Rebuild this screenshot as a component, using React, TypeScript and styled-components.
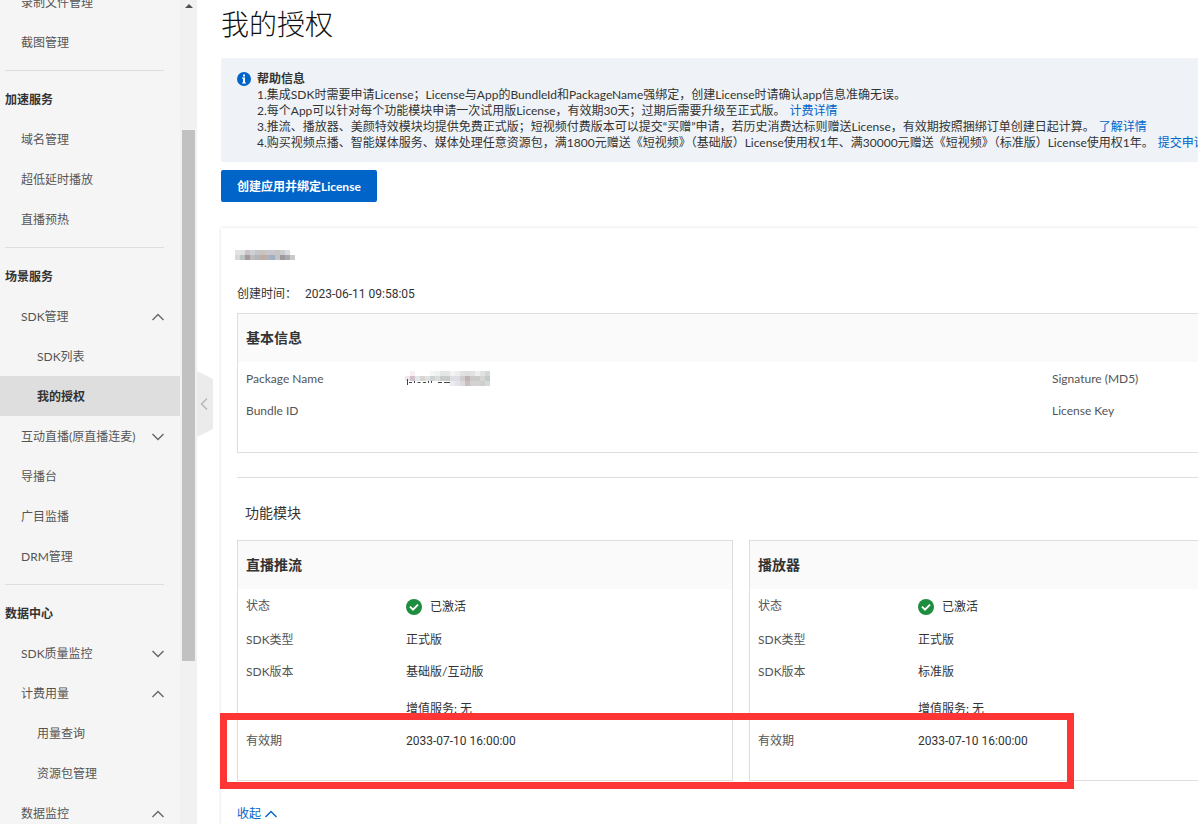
import React from "react";
import styled, { createGlobalStyle, css } from "styled-components";

const Global = createGlobalStyle`
  *, *::before, *::after { box-sizing: border-box; }
  body {
    margin: 0;
    background: #fff;
    color: #333;
    font: 12px/16px Lato, "Noto Sans CJK SC", sans-serif;
  }
  h1, h2, h3, p, dl, dd, ul, ol { margin: 0; padding: 0; }
  ul, ol { list-style: none; }
  button { font: inherit; cursor: pointer; }
  a { color: #0064c8; text-decoration: none; }
  time { font-family: Roboto, sans-serif; }
`;

const Page = styled.div`
  display: flex;
  height: 100vh;
  overflow: hidden;
`;

const Sidebar = styled.aside`
  position: relative;
  z-index: 1;
  display: flex;
  flex: none;
  background: #f5f5f5;
`;

const Nav = styled.nav`
  width: 180px;
  overflow: hidden;
`;

const NavScroll = styled.div`
  margin-top: -18px;
`;

const NavGroup = styled.section`
  & + &::before {
    content: "";
    display: block;
    height: 1px;
    margin: 8px 16px 8px 5px;
    background: #dedede;
  }
`;

const NavHeading = styled.h2`
  height: 40px;
  padding-left: 5px;
  font-size: 12px;
  line-height: 42px;
`;

const navRow = css`
  display: flex;
  align-items: center;
  justify-content: space-between;
  width: 100%;
  height: 40px;
  padding: 2px 16px 0 21px;
  border: 0;
  background: none;
  color: #555;
  white-space: nowrap;
`;

const NavToggle = styled.button`
  ${navRow}
`;

const NavLink = styled.a<{ $nested?: boolean; $active?: boolean }>`
  ${navRow}
  ${(p) => p.$nested && "padding-left: 37px;"}
  ${(p) => p.$active && "background: #dedede; color: #333; font-weight: 700;"}
`;

const ScrollTrack = styled.div`
  display: flex;
  flex-direction: column;
  align-items: center;
  width: 17px;
  background: #f1f1f1;
`;

const ScrollArrow = styled.div`
  flex: none;
  height: 17px;
  padding-top: 4px;
  &::before {
    content: "";
    display: block;
    border: 4px solid transparent;
    border-top-width: 0;
    border-bottom-color: #505050;
  }
`;

const ScrollSpace = styled.div<{ $part: number }>`
  flex: ${(p) => p.$part};
`;

const ScrollThumb = styled.div`
  flex: 531;
  width: 13px;
  background: #c1c1c1;
`;

const CollapseTab = styled.button`
  position: absolute;
  left: 100%;
  top: calc(50% - 41px);
  display: flex;
  align-items: center;
  justify-content: center;
  width: 16px;
  height: 66px;
  padding: 0 2px 0 0;
  border: 0;
  background: #ebebeb;
  clip-path: polygon(0 0, 100% 8px, 100% 58px, 0 100%);
`;

const Main = styled.main`
  flex: 1;
  min-width: 0;
  padding: 6px 0 0 24px;
  overflow: hidden;
`;

const Title = styled.h1`
  margin-bottom: 16px;
  color: #111;
  font-size: 28px;
  line-height: 36px;
  font-weight: 300;
`;

const Notice = styled.section`
  display: flex;
  gap: 6px;
  padding: 13px 16px 11px;
  border-radius: 2px 0 0 2px;
  background: #eff3f8;
  white-space: nowrap;
`;

const NoticeIcon = styled.svg`
  flex: none;
  margin-top: 1px;
`;

const NoticeTitle = styled.h2`
  font-size: 12px;
  line-height: 16px;
`;

const NoticeLink = styled.a`
  margin-left: 4px;
`;

const PrimaryButton = styled.button`
  display: block;
  height: 32px;
  margin: 8px 0 26px;
  padding: 2px 16px 0;
  border: 0;
  border-radius: 2px;
  background: #0064c8;
  color: #fff;
  font-weight: 700;
`;

const Card = styled.article`
  padding: 22px 0 24px 16px;
  box-shadow: 0 0 3px rgba(0, 0, 0, 0.14);
`;

const AppName = styled.svg`
  display: block;
  margin: 0 0 26px -2px;
`;

const Created = styled.p`
  display: flex;
  gap: 8px;
  margin-bottom: 11px;
`;

const Panel = styled.section`
  flex: none;
  border: 1px solid #dedede;
`;

const InfoPanel = styled(Panel)`
  width: 1622px;
`;

const ModulePanel = styled(Panel)`
  width: 496px;
`;

const PanelTitle = styled.h3`
  padding-left: 8px;
  background: #fafafa;
  font-size: 14px;
  line-height: 48px;
`;

const ModuleFields = styled.dl`
  padding: 1px 0 23px 8px;
`;

const InfoFields = styled.dl`
  display: grid;
  grid-template-columns: 1fr 1fr;
  padding: 1px 0 25px 8px;
`;

const Field = styled.div`
  display: flex;
  line-height: 32px;
`;

const Term = styled.dt`
  width: 160px;
  color: #555;
`;

const Status = styled.dd`
  display: flex;
  align-items: center;
  gap: 8px;
  height: 34px;
`;

const Extra = styled.p`
  margin-top: 5px;
`;

const PackageName = styled.svg`
  display: block;
  margin: 8px 0 0 -1px;
`;

const Divider = styled.hr`
  height: 1px;
  margin: 24px 0;
  border: 0;
  background: #dedede;
`;

const SectionTitle = styled.h2`
  margin-bottom: 16px;
  padding-left: 8px;
  font-size: 14px;
  line-height: 22px;
  font-weight: 400;
`;

const Modules = styled.div`
  position: relative;
  display: flex;
  gap: 16px;
`;

const Highlight = styled.div`
  position: absolute;
  top: 173px;
  left: -17px;
  width: 854px;
  height: 76px;
  border: 7px solid #fd3535;
  pointer-events: none;
`;

const FoldButton = styled.button`
  display: flex;
  align-items: center;
  gap: 4px;
  margin-top: 25px;
  padding: 0;
  border: 0;
  background: none;
  color: #0064c8;
`;

function Chevron({ up, color = "#666" }: { up?: boolean; color?: string }) {
  return (
    <svg width="12" height="8" viewBox="0 0 12 8" fill="none" stroke={color} strokeWidth="1.4" aria-hidden>
      <path d={up ? "M0.5 7 L6 1.5 L11.5 7" : "M0.5 1 L6 6.5 L11.5 1"} />
    </svg>
  );
}

type Item = { label: string; open?: boolean; nested?: boolean; active?: boolean };

const groups: { title?: string; items: Item[] }[] = [
  { items: [{ label: "录制文件管理" }, { label: "截图管理" }] },
  { title: "加速服务", items: [{ label: "域名管理" }, { label: "超低延时播放" }, { label: "直播预热" }] },
  {
    title: "场景服务",
    items: [
      { label: "SDK管理", open: true },
      { label: "SDK列表", nested: true },
      { label: "我的授权", nested: true, active: true },
      { label: "互动直播(原直播连麦)", open: false },
      { label: "导播台" },
      { label: "广目监播" },
      { label: "DRM管理" },
    ],
  },
  {
    title: "数据中心",
    items: [
      { label: "SDK质量监控", open: false },
      { label: "计费用量", open: true },
      { label: "用量查询", nested: true },
      { label: "资源包管理", nested: true },
      { label: "数据监控", open: true },
    ],
  },
];

const notes: { text: string; link?: string }[] = [
  { text: "1.集成SDK时需要申请License；License与App的BundleId和PackageName强绑定，创建License时请确认app信息准确无误。" },
  { text: "2.每个App可以针对每个功能模块申请一次试用版License，有效期30天；过期后需要升级至正式版。", link: "计费详情" },
  { text: "3.推流、播放器、美颜特效模块均提供免费正式版；短视频付费版本可以提交“买赠”申请，若历史消费达标则赠送License，有效期按照捆绑订单创建日起计算。", link: "了解详情" },
  { text: "4.购买视频点播、智能媒体服务、媒体处理任意资源包，满1800元赠送《短视频》（基础版）License使用权1年、满30000元赠送《短视频》（标准版）License使用权1年。", link: "提交申请" },
];

const modules = [
  { name: "直播推流", version: "基础版/互动版" },
  { name: "播放器", version: "标准版" },
];

function Mosaic({ rows, cell }: { rows: string[][]; cell: number }) {
  return (
    <>
      {rows.map((row, y) =>
        row.map((fill, x) => <rect key={`${x}-${y}`} x={x * cell} y={y * cell} width={cell} height={cell} fill={fill} />)
      )}
    </>
  );
}

const nameTiles = [
  ["#e4e2e0", "#dfe0e0", "#c9c5c6", "#cfd0d4", "#c4c6cb", "#c9c3c0", "#c5c9ce", "#c8c8cc", "#c9c5c2", "#cccdd0", "#dcdcdf", "#ffffff"],
  ["#dcd6d2", "#b9c4c0", "#a49a9c", "#bcbcc0", "#b2b6bf", "#c0aca0", "#b7b0ba", "#9fb0c4", "#c6c3c3", "#9c9a9c", "#aaa9ac", "#c8c9cd"],
];

const packageTiles = [
  ["none", "#f9eef1", "none", "none", "none", "#f4f6f5", "#eef1f0", "#e3e7e5", "#e3e7e5", "#f4f4f4", "#ececf2", "#e3e0e0", "#dedede", "#e2e2e0", "#efefef", "#dfe2e0", "#d3d8d6"],
  ["#ece8ea", "#d3bfcb", "#e0e8ea", "#d8d4d2", "#dfe2de", "#cdd3d0", "#dcdcdc", "#c8cdca", "#c8cdca", "#dedede", "#dcdcea", "#d3cccc", "#bfb3b3", "#cfcaca", "#c9cbc9", "#d6d6d3", "#c4cbc9"],
  ["none", "none", "none", "none", "none", "none", "none", "none", "none", "#eceaf0", "#e4e2ec", "#dcdada", "#c9bfbf", "#d5d2d2", "#d3d3d3", "#cdd0ce", "#d6dbd9"],
];

export default function App() {
  return (
    <>
      <Global />
      <Page>
        <Sidebar>
          <Nav aria-label="产品导航">
            <NavScroll>
              {groups.map((group, i) => (
                <NavGroup key={i}>
                  {group.title && <NavHeading>{group.title}</NavHeading>}
                  {group.items.map((item) =>
                    item.open === undefined ? (
                      <NavLink key={item.label} href="#" $nested={item.nested} $active={item.active}>
                        {item.label}
                      </NavLink>
                    ) : (
                      <NavToggle key={item.label} type="button" aria-expanded={item.open}>
                        {item.label}
                        <Chevron up={item.open} />
                      </NavToggle>
                    )
                  )}
                </NavGroup>
              ))}
            </NavScroll>
          </Nav>
          <ScrollTrack aria-hidden>
            <ScrollArrow />
            <ScrollSpace $part={113} />
            <ScrollThumb />
            <ScrollSpace $part={163} />
          </ScrollTrack>
          <CollapseTab type="button" aria-label="收起导航">
            <svg width="8" height="12" viewBox="0 0 8 12" fill="none" stroke="#b5b5b5" strokeWidth="1.4">
              <path d="M7 0.5 L1.5 6 L7 11.5" />
            </svg>
          </CollapseTab>
        </Sidebar>
        <Main>
          <Title>我的授权</Title>
          <Notice>
            <NoticeIcon width="14" height="14" viewBox="0 0 14 14" aria-hidden>
              <circle cx="7" cy="7" r="7" fill="#0064c8" />
              <path d="M6 2.5h2v2H6zM5 5.5h3v5h1v1H5v-1h1v-4H5z" fill="#fff" />
            </NoticeIcon>
            <div>
              <NoticeTitle>帮助信息</NoticeTitle>
              <ol>
                {notes.map((note) => (
                  <li key={note.text}>
                    {note.text}
                    {note.link && <NoticeLink href="#">{note.link}</NoticeLink>}
                  </li>
                ))}
              </ol>
            </div>
          </Notice>
          <PrimaryButton type="button">创建应用并绑定License</PrimaryButton>
          <Card>
            <AppName width="60" height="10" viewBox="0 0 60 10" aria-hidden>
              <Mosaic rows={nameTiles} cell={5} />
            </AppName>
            <Created>
              <span>创建时间：</span>
              <time>2023-06-11 09:58:05</time>
            </Created>
            <InfoPanel>
              <PanelTitle>基本信息</PanelTitle>
              <InfoFields>
                <Field>
                  <Term>Package Name</Term>
                  <dd>
                    <PackageName width="85" height="15" viewBox="0 0 85 15" aria-hidden>
                      <Mosaic rows={packageTiles} cell={5} />
                      <path
                        d="M2.5 8v6M4 11.5h3M9.5 10v2M12.5 11.5h3M18 11.5h3M23.5 10v2M26.5 10v2M33 11.5h4M39 11.5h6"
                        stroke="#444"
                        fill="none"
                      />
                    </PackageName>
                  </dd>
                </Field>
                <Field>
                  <Term>Signature (MD5)</Term>
                </Field>
                <Field>
                  <Term>Bundle ID</Term>
                </Field>
                <Field>
                  <Term>License Key</Term>
                </Field>
              </InfoFields>
            </InfoPanel>
            <Divider />
            <SectionTitle>功能模块</SectionTitle>
            <Modules>
              {modules.map((m) => (
                <ModulePanel key={m.name}>
                  <PanelTitle>{m.name}</PanelTitle>
                  <ModuleFields>
                    <Field>
                      <Term>状态</Term>
                      <Status>
                        <svg width="16" height="16" viewBox="0 0 16 16" aria-hidden>
                          <circle cx="8" cy="8" r="8" fill="#1e8e3e" />
                          <path d="M4 7.6 L7 10.6 L12 5.6" fill="none" stroke="#fff" strokeWidth="2" />
                        </svg>
                        已激活
                      </Status>
                    </Field>
                    <Field>
                      <Term>SDK类型</Term>
                      <dd>正式版</dd>
                    </Field>
                    <Field>
                      <Term>SDK版本</Term>
                      <dd>
                        {m.version}
                        <Extra>增值服务: 无</Extra>
                      </dd>
                    </Field>
                    <Field>
                      <Term>有效期</Term>
                      <dd>
                        <time>2033-07-10 16:00:00</time>
                      </dd>
                    </Field>
                  </ModuleFields>
                </ModulePanel>
              ))}
              <Highlight />
            </Modules>
            <FoldButton type="button">
              收起
              <Chevron up color="#0064c8" />
            </FoldButton>
          </Card>
        </Main>
      </Page>
    </>
  );
}
